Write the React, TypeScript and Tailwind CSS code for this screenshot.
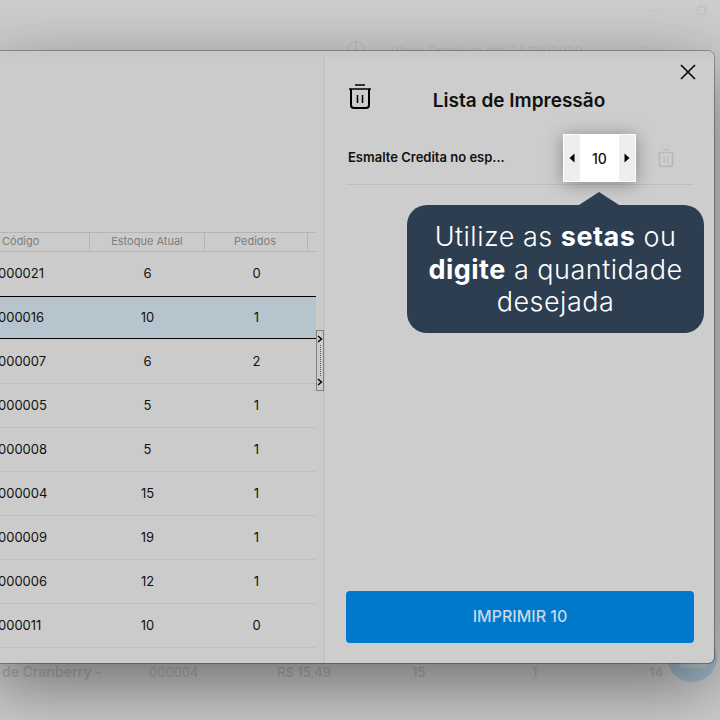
const ROWS = [
  { code: '000021', stock: '6', orders: '0', rowClass: 'h-[45px] border-black' },
  { code: '000016', stock: '10', orders: '1', rowClass: 'h-[42px] bg-[#b6c4ce] border-black' },
  { code: '000007', stock: '6', orders: '2', rowClass: 'h-[45px] pt-[1px] border-[#c0c0c0]' },
  { code: '000005', stock: '5', orders: '1', rowClass: 'h-[44px] border-[#c0c0c0]' },
  { code: '000008', stock: '5', orders: '1', rowClass: 'h-[44px] border-[#c0c0c0]' },
  { code: '000004', stock: '15', orders: '1', rowClass: 'h-[44px] border-[#c0c0c0]' },
  { code: '000009', stock: '19', orders: '1', rowClass: 'h-[44px] border-[#c0c0c0]' },
  { code: '000006', stock: '12', orders: '1', rowClass: 'h-[44px] border-[#c0c0c0]' },
  { code: '000011', stock: '10', orders: '0', rowClass: 'h-[44px] border-[#c0c0c0]' },
];

const TrashIcon = ({ className }: { className: string }) => (
  <svg viewBox="0 0 22 26" fill="none" stroke="currentColor" strokeWidth="2" className={className}>
    <path d="M6 1h10" strokeWidth="1.5" />
    <path d="M0 5h22" strokeWidth="1.5" />
    <path d="M2 5v16a3 3 0 0 0 3 3h12a3 3 0 0 0 3-3V5" />
    <path d="M8.5 11v8M13.5 11v8" strokeWidth="1.5" />
  </svg>
);

const Chevron = () => (
  <svg viewBox="0 0 6 8" fill="none" stroke="#000" strokeWidth="1.5" className="w-[6px] h-[8px]">
    <path d="M1 1l3.5 3L1 7" />
  </svg>
);

const Caret = ({ right }: { right?: boolean }) => (
  <svg viewBox="0 0 6 10" fill="#000" className="w-[6px] h-[10px]">
    <path d={right ? 'M0.5 0.5L5.5 5L0.5 9.5Z' : 'M5.5 0.5L0.5 5L5.5 9.5Z'} />
  </svg>
);

const Background = () => (
  <div className="h-full flex flex-col justify-between text-[#c0c0c0]">
    <div className="flex flex-col">
      <div className="h-[28px] flex justify-end items-center gap-[38px] pr-[13px] pb-[8px]">
        <div className="w-[10px] h-px bg-[#c2c2c2]" />
        <svg viewBox="0 0 10 10" fill="none" stroke="#c2c2c2" className="w-[10px] h-[10px]">
          <path d="M2.5 2.5V0.5h7v7H7.5M0.5 2.5h7v7h-7z" />
        </svg>
      </div>
      <div className="h-[39px] mt-[4px] flex justify-end items-center pr-[8px] text-[13px]">
        <svg viewBox="0 0 16 16" fill="none" stroke="#bababa" className="w-[16px] h-[16px] mr-[27px] mb-[6px]">
          <circle cx="8" cy="8" r="7.5" />
          <path d="M8 .5V8L2.5 13M8 8l5.5 5" />
        </svg>
        <span className="mr-[40px]">Plano Premium até 24/09/2020</span>
        <div className="w-[39px] h-[39px] mr-[11px] rounded-full border border-[#cacaca] flex items-center justify-center">
          <div className="w-[12px] h-[12px] rounded-full border border-[#c0c0c0]" />
        </div>
        <div className="w-[39px] h-[39px] rounded-full border border-[#cacaca] flex items-center justify-center">
          <svg viewBox="0 0 12 12" fill="none" stroke="#c0c0c0" className="w-[12px] h-[12px]">
            <path d="M1 11L6 1l5 10" />
          </svg>
        </div>
      </div>
    </div>
    <div className="h-[57px] relative text-[13px] leading-[18px] font-medium text-[#b4b4b4]">
      <div className="grid grid-cols-[147px_128px_135px_120px_117px_1fr] pl-[2px]">
        <span className="text-[14px] font-semibold">de Cranberry -</span>
        <span className="font-normal">000004</span>
        <span>R$ 15,49</span>
        <span>15</span>
        <span className="underline decoration-[#a8c8b8]">1</span>
        <span>14</span>
      </div>
      <svg viewBox="0 0 50 50" className="absolute right-[3px] top-[-31px] w-[50px] h-[50px]">
        <circle cx="25" cy="25" r="25" fill="#a4bccb" />
        <path d="M13 30h26v8l-5-2H13z" fill="#bcc5ca" />
      </svg>
    </div>
  </div>
);

const Table = () => (
  <div className="w-[316px] ml-[10px] text-[13px] text-[#111]">
    <div className="h-[20px] grid grid-cols-[90px_115px_103px_8px] items-center border-y border-[#b5b5b5] text-[11px] text-[#7d7d7d]">
      <span className="h-full pl-[2px] border-r border-[#b5b5b5]">Código</span>
      <span className="h-full text-center border-r border-[#b5b5b5]">Estoque Atual</span>
      <span className="h-full pr-[2px] text-center border-r border-[#b5b5b5]">Pedidos</span>
      <span />
    </div>
    {ROWS.map(row => (
      <div key={row.code} className={`grid grid-cols-[90px_115px_103px_8px] items-center border-b ${row.rowClass}`}>
        <span className="-ml-[2px]">{row.code}</span>
        <span className="text-center">{row.stock}</span>
        <span className="text-center">{row.orders}</span>
        <span />
      </div>
    ))}
  </div>
);

export default function App() {
  return (
    <div className="relative w-[720px] h-[720px] overflow-hidden bg-[#cdcdcd] font-['Inter',sans-serif]">
      <Background />

      <div className="absolute left-[-10px] top-[51px] w-[724px] h-[612px] flex flex-col bg-[#cdcdcd] rounded-[6px] shadow-[0_0_0_1px_rgba(0,0,0,0.28),0_22px_70px_rgba(0,0,0,0.48)]">
        <div className="h-[6px] shrink-0 rounded-t-[6px] bg-[#c8c8c8]" />

        <div className="flex-1 flex min-h-0">
          <div className="w-[335px] relative flex flex-col pt-[175px] bg-[#cbcbcb] border-r-2 border-[#c3c3c3]">
            <Table />
            <div className="absolute left-[326px] top-[273px] w-[8px] h-[61px] border border-[#808080] flex flex-col items-center justify-between py-[4px]">
              <Chevron />
              <div className="flex-1 my-[2px] border-l border-dotted border-[#0078cc]" />
              <Chevron />
            </div>
          </div>

          <div className="flex-1 flex flex-col pl-[21px] pr-[20px] pb-[20px]">
            <div className="h-[72px] relative flex items-end justify-center pb-[16px] pr-[2px]">
              <TrashIcon className="absolute left-[3px] bottom-[19px] w-[22px] h-[26px] text-black" />
              <svg viewBox="0 0 16 16" fill="none" stroke="#000" strokeWidth="1.5" className="absolute right-[-2px] top-[7px] w-[16px] h-[16px]">
                <path d="M1 1l14 14M15 1L1 15" />
              </svg>
              <h1 className="text-[19px] leading-[24px] font-semibold text-[#111]">Lista de Impressão</h1>
            </div>

            <div className="h-[56px] flex items-center border-b border-[#bdbdbd] pt-[3px] pl-[2px] pr-[19px] mr-[1px]">
              <span className="flex-1 text-[13px] font-semibold text-[#111]">Esmalte Credita no esp...</span>
              <TrashIcon className="w-[16px] h-[19px] text-[#b7b7b7]" />
            </div>

            <div className="flex-1" />

            <button className="h-[52px] w-full pb-[2px] bg-[#0078cc] rounded-[4px] text-[16px] font-medium text-[#c8d8e4]">
              IMPRIMIR 10
            </button>
          </div>
        </div>
      </div>

      {/* spotlight over the overlay: quantity input and its hint */}
      <div className="absolute left-[563px] top-[134px] w-[73px] h-[48px] flex bg-white border border-white shadow-[0_2px_18px_rgba(0,0,0,0.35)]">
        <div className="w-[16px] bg-[#eeeeee] flex items-center justify-center"><Caret /></div>
        <div className="flex-1 flex items-center justify-center text-[14px] font-medium text-[#111]">10</div>
        <div className="w-[16px] bg-[#eeeeee] flex items-center justify-center"><Caret right /></div>
      </div>

      <div className="absolute left-[407px] top-[205px] w-[297px] h-[128px] rounded-[20px] bg-[#2c3e50] text-white text-center text-[27px] leading-[32.5px] tracking-[0.5px] font-light pt-[16px]">
        <div className="absolute left-[172px] top-[-13px] w-0 h-0 border-x-[20px] border-x-transparent border-b-[13px] border-b-[#2c3e50]" />
        Utilize as <b className="font-bold">setas</b> ou
        <br />
        <b className="font-bold">digite</b> a quantidade
        <br />
        desejada
      </div>
    </div>
  );
}
